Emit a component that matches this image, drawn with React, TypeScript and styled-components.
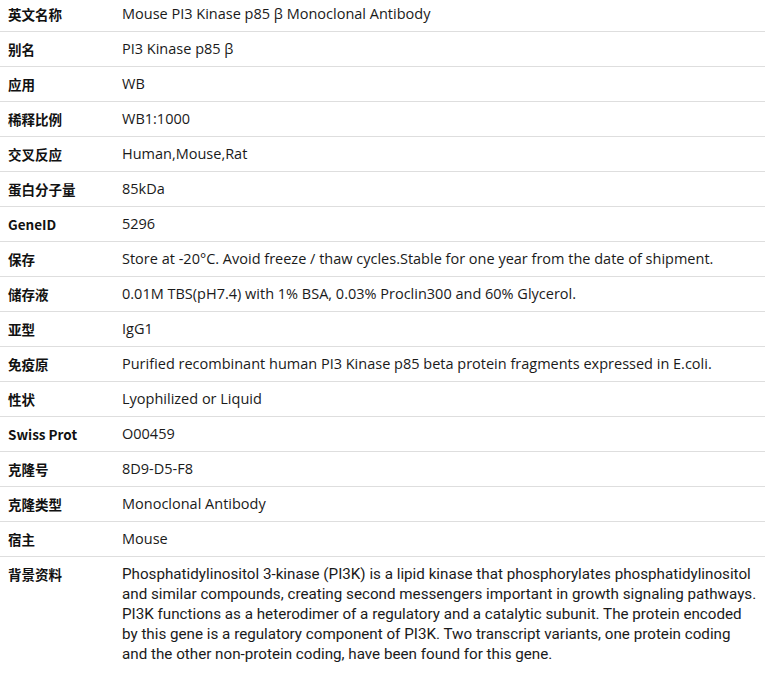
import React from "react";
import styled, { createGlobalStyle } from "styled-components";

const Global = createGlobalStyle`
  html, body { margin: 0; padding: 0; background: #fff; }
  body { font-family: "Open Sans", "Noto Sans CJK SC", sans-serif; color: #222; }
`;

const Table = styled.div`
  display: grid;
  grid-template-columns: 122px 1fr;
  width: 765px;
  margin-top: -3px;
`;

const Label = styled.div<{ $last?: boolean }>`
  padding: 7px 0 7px 8px;
  line-height: 20px;
  font-size: 13.5px;
  font-weight: 700;
  color: #111;
  font-family: "Noto Sans CJK SC", "Open Sans", sans-serif;
  border-bottom: ${(p) => (p.$last ? "none" : "1px solid #dedede")};
`;

const Value = styled.div<{ $last?: boolean; $condensed?: boolean }>`
  padding: 7px 8px 7px 0;
  line-height: 20px;
  font-size: ${(p) => (p.$condensed ? "15.2px" : "14.5px")};
  color: #1a1a1a;
  font-family: ${(p) => (p.$condensed ? '"Roboto", sans-serif' : '"Open Sans", sans-serif')};
  border-bottom: ${(p) => (p.$last ? "none" : "1px solid #dedede")};
`;

const rows: [string, string][] = [
  ["英文名称", "Mouse PI3 Kinase p85 β Monoclonal Antibody"],
  ["别名", "PI3 Kinase p85 β"],
  ["应用", "WB"],
  ["稀释比例", "WB1:1000"],
  ["交叉反应", "Human,Mouse,Rat"],
  ["蛋白分子量", "85kDa"],
  ["GeneID", "5296"],
  ["保存", "Store at -20°C. Avoid freeze / thaw cycles.Stable for one year from the date of shipment."],
  ["储存液", "0.01M TBS(pH7.4) with 1% BSA, 0.03% Proclin300 and 60% Glycerol."],
  ["亚型", "IgG1"],
  ["免疫原", "Purified recombinant human PI3 Kinase p85 beta protein fragments expressed in E.coli."],
  ["性状", "Lyophilized or Liquid"],
  ["Swiss Prot", "O00459"],
  ["克隆号", "8D9-D5-F8"],
  ["克隆类型", "Monoclonal Antibody"],
  ["宿主", "Mouse"],
  [
    "背景资料",
    "Phosphatidylinositol 3-kinase (PI3K) is a lipid kinase that phosphorylates phosphatidylinositol and similar compounds, creating second messengers important in growth signaling pathways. PI3K functions as a heterodimer of a regulatory and a catalytic subunit. The protein encoded by this gene is a regulatory component of PI3K. Two transcript variants, one protein coding and the other non-protein coding, have been found for this gene.",
  ],
];

export default function App() {
  return (
    <>
      <Global />
      <Table>
        {rows.map(([k, v], i) => {
          const last = i === rows.length - 1;
          return (
            <React.Fragment key={k}>
              <Label $last={last}>{k}</Label>
              <Value $last={last} $condensed={last}>{v}</Value>
            </React.Fragment>
          );
        })}
      </Table>
    </>
  );
}
